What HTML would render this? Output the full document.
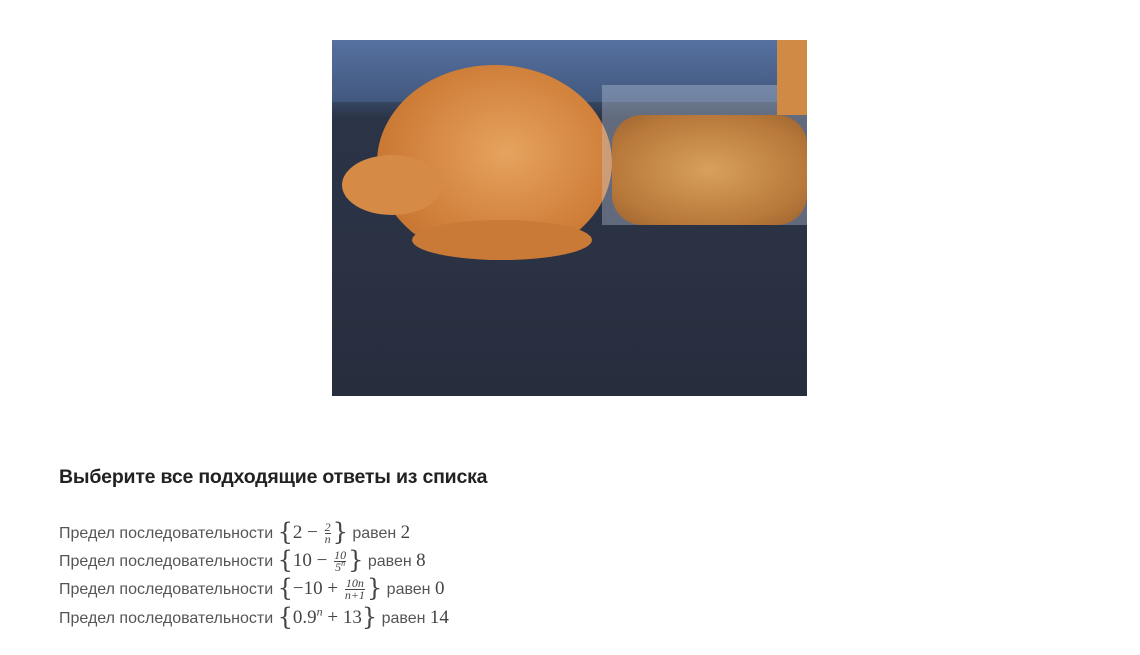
<!DOCTYPE html>
<html><head><meta charset="utf-8"><style>
body{margin:0;background:#fff;width:1140px;height:655px;overflow:hidden;font-family:"Liberation Sans",sans-serif;position:relative}
.img{position:absolute;left:332px;top:40px;width:475px;height:356px;overflow:hidden;background:linear-gradient(180deg,#4a5f80 0%,#3f5373 14%,#2b3447 22%,#2a3244 60%,#262d3d 100%)}
h3{position:absolute;left:59px;top:466px;margin:0;font-size:19.5px;font-weight:bold;color:#222;letter-spacing:-0.2px}
.l{position:absolute;left:59px;font-size:16px;color:#555;white-space:nowrap;height:28px;line-height:28px}
.m{font-family:"Liberation Serif",serif;font-size:19px;color:#444}
.b{font-size:24px;font-family:"DejaVu Serif",serif;font-weight:normal;vertical-align:-2px;color:#444;line-height:0}
.f{display:inline-block;vertical-align:middle;text-align:center;font-size:12px;line-height:11px;font-style:italic;margin:0 2px}
.f span{display:block}
.f .t{border-bottom:1px solid #444}
sup{line-height:0;font-style:italic}
</style></head><body>
<div class="img">
<div style="position:absolute;left:0;top:0;width:475px;height:62px;background:linear-gradient(180deg,#5670a0,#42597e)"></div>
<div style="position:absolute;left:45px;top:25px;width:235px;height:195px;border-radius:50%;background:radial-gradient(ellipse at 55% 45%,#e5a35f,#cf7e38 60%,#b86a2a)"></div>
<div style="position:absolute;left:10px;top:115px;width:100px;height:60px;border-radius:50%;background:#d58a45"></div>
<div style="position:absolute;left:80px;top:180px;width:180px;height:40px;border-radius:50%;background:#c97a36"></div>
<div style="position:absolute;left:270px;top:45px;width:205px;height:140px;background:rgba(200,210,225,0.35)"></div>
<div style="position:absolute;left:280px;top:75px;width:195px;height:110px;border-radius:30px;background:radial-gradient(ellipse,#d8a05c,#b8793a 70%,#9c6330)"></div>
<div style="position:absolute;left:445px;top:0;width:30px;height:75px;background:#cf8a45"></div>
</div>
<h3>Выберите все подходящие ответы из списка</h3>
<div class="l" style="top:519px">Предел последовательности <span class="m"><span class="b">{</span>2 − <span class="f"><span class="t">2</span><span>n</span></span><span class="b">}</span></span> равен <span class="m">2</span></div>
<div class="l" style="top:547px">Предел последовательности <span class="m"><span class="b">{</span>10 − <span class="f"><span class="t">10</span><span>5<sup style="font-size:8px">n</sup></span></span><span class="b">}</span></span> равен <span class="m">8</span></div>
<div class="l" style="top:575px">Предел последовательности <span class="m"><span class="b">{</span>−10 + <span class="f"><span class="t">10n</span><span>n+1</span></span><span class="b">}</span></span> равен <span class="m">0</span></div>
<div class="l" style="top:604px">Предел последовательности <span class="m"><span class="b">{</span>0.9<sup style="font-size:12px">n</sup> + 13<span class="b">}</span></span> равен <span class="m">14</span></div>
</body></html>
